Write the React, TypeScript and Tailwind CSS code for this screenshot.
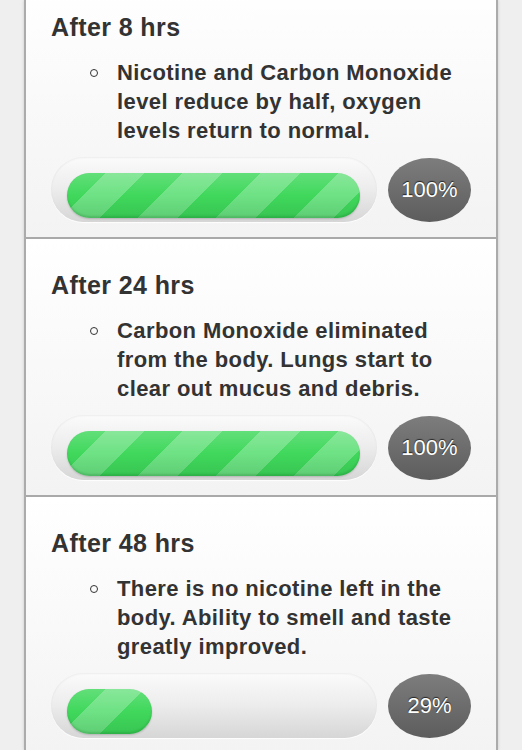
const milestones = [
  {
    title: 'After 8 hrs',
    text: 'Nicotine and Carbon Monoxide level reduce by half, oxygen levels return to normal.',
    pct: 100,
  },
  {
    title: 'After 24 hrs',
    text: 'Carbon Monoxide eliminated from the body. Lungs start to clear out mucus and debris.',
    pct: 100,
  },
  {
    title: 'After 48 hrs',
    text: 'There is no nicotine left in the body. Ability to smell and taste greatly improved.',
    pct: 29,
  },
]

function Progress({ pct }: { pct: number }) {
  return (
    <div className="flex items-center gap-[11px] h-[65px]">
      <div className="w-[326px] h-[65px] rounded-full bg-gradient-to-b from-[#fbfbfb] via-[#ececec] to-[#d6d6d6] shadow-[inset_0_1px_2px_rgba(0,0,0,0.06),0_1px_1px_rgba(255,255,255,0.9)] pl-[16px] pr-[17px] pt-[16px] pb-[4px]">
        <div
          className="relative h-[45px] min-w-[45px] rounded-full overflow-hidden bg-[#3dd65a] bg-[image:repeating-linear-gradient(135deg,#40d85c_0px,#40d85c_27px,#6ee284_27px,#6ee284_55px)] shadow-[0_1px_2px_rgba(0,0,0,0.18)]"
          style={{ width: `${pct}%` }}
        >
          <div className="absolute inset-0 rounded-full bg-gradient-to-b from-[rgba(255,255,255,0.18)] via-transparent to-[rgba(0,80,20,0.14)] shadow-[inset_0_-2px_2px_rgba(0,90,20,0.18)]" />
        </div>
      </div>
      <div className="w-[83px] h-[64px] rounded-[50%] bg-gradient-to-b from-[#7d7d7d] to-[#5d5d5d] flex items-center justify-center text-white text-[22px] [text-shadow:0_-1px_1px_rgba(0,0,0,0.7)]">
        {pct}%
      </div>
    </div>
  )
}

export default function App() {
  return (
    <div className="w-[522px] h-[750px] overflow-hidden bg-[#efefef] font-['Liberation_Sans',Arial,sans-serif] text-[#333]">
      <div className="mx-[24px] h-full flex flex-col border-x-2 border-[#ababab] shadow-[0_0_3px_rgba(0,0,0,0.15)] bg-[#f4f4f4]">
        <div className="-mt-[19px]">
          {milestones.map((m) => (
            <div
              key={m.title}
              className="pl-[25px] pr-[25px] pt-[32px] pb-[15px] border-b-2 border-[#a9a9a9] bg-gradient-to-b from-white to-[#f3f3f3]"
            >
              <div className="text-[25px] leading-[28px] font-bold tracking-[0.4px]">{m.title}</div>
              <div className="mt-[17px] ml-[39px] flex">
                <span className="mt-[11px] w-[8px] h-[8px] rounded-full border-[1.5px] border-[#333] shrink-0" />
                <p className="ml-[19px] w-[348px] text-[22px] leading-[29px] font-bold tracking-[0.4px]">{m.text}</p>
              </div>
              <div className="mt-[12px]">
                <Progress pct={m.pct} />
              </div>
            </div>
          ))}
        </div>
      </div>
    </div>
  )
}
